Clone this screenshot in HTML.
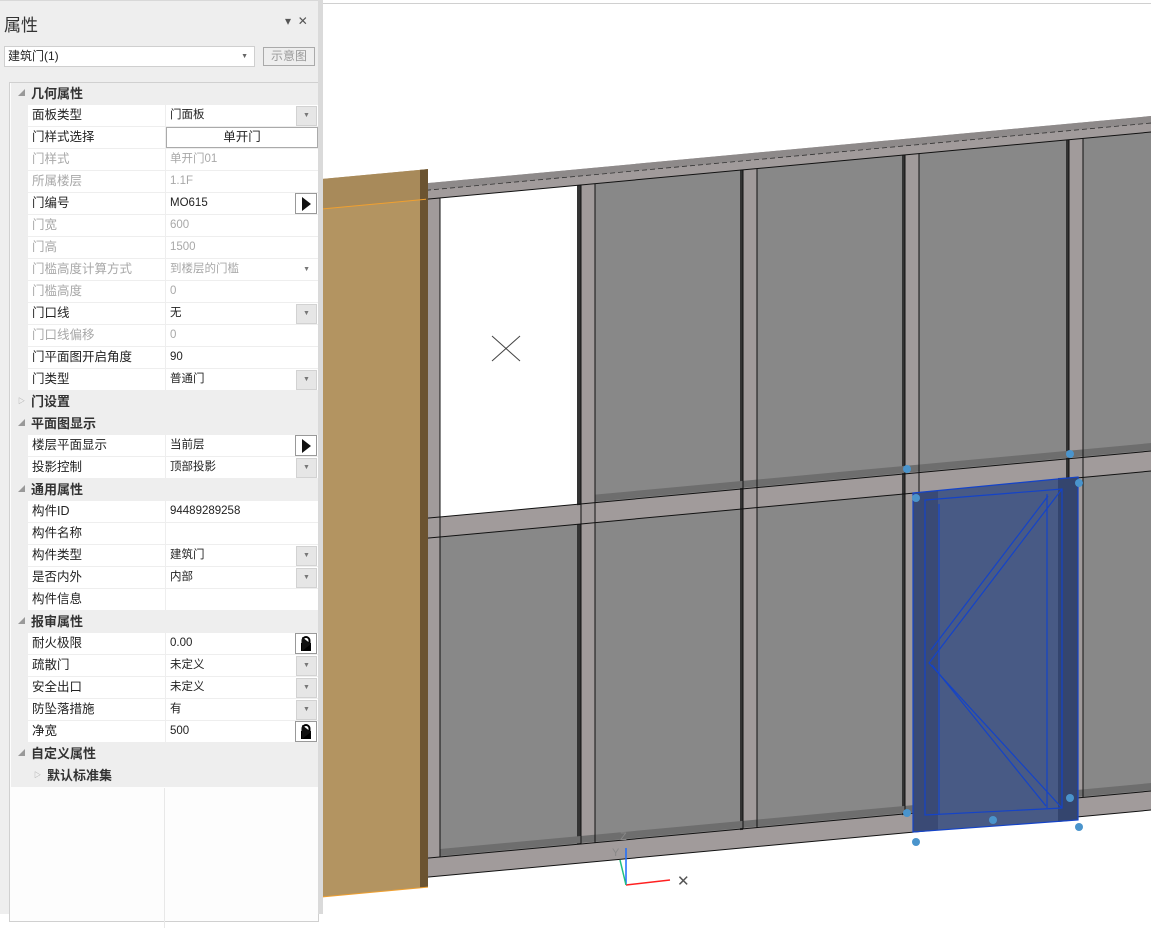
<!DOCTYPE html>
<html><head><meta charset="utf-8"><style>
*{margin:0;padding:0;box-sizing:border-box}
body{width:1151px;height:914px;overflow:hidden;background:#fff;font-family:"Liberation Sans","Noto Sans CJK SC",sans-serif;font-size:12px;color:#222;position:relative}
#panel{position:absolute;left:0;top:0;width:320px;height:914px;background:#eeeeee;border-top:1px solid #d8d8d8}
#title{position:absolute;left:4px;top:10px;font-size:17px;color:#333}
#tbtn{position:absolute;left:285px;top:13px;font-size:12px;color:#555}
#combo{position:absolute;left:4px;top:45px;width:251px;height:21px;background:#fff;border:1px solid #cfcfcf;font-size:12px;line-height:19px;padding-left:3px}
#combo span{position:absolute;right:6px;top:0;font-size:7px;color:#666}
#sbtn{position:absolute;left:263px;top:46px;width:52px;height:19px;border:1px solid #aaa;background:#eee;color:#999;font-size:12px;line-height:17px;text-align:center}
#grid{position:absolute;left:9px;top:81px;width:310px;height:840px;border:1px solid #d0d0d0;background:#fdfdfd}
#colline{position:absolute;left:154px;top:705px;width:1px;height:140px;background:#e8e8e8}
.r{position:absolute;left:1px;width:307px;height:22px}
.h{background:#eeeeee;font-weight:bold;font-size:13px;color:#333;line-height:22px}
.h .t{position:absolute;left:20px}
.h .tri{position:absolute;left:7px;top:0;font-size:7px;color:#999;font-weight:normal}
.p{background:#eee}
.p .n{position:absolute;left:17px;top:0;width:137px;height:21px;background:#fff;line-height:21px;padding-left:4px;font-size:12.5px}
.p .v{position:absolute;left:155px;top:0;width:152px;height:21px;background:#fff;line-height:21px;padding-left:4px;font-size:11.5px}
.g .n,.g .v{color:#a8a8a8}
.dd{position:absolute;right:1px;top:1px;width:21px;height:20px;background:#e6e6e6;border:1px solid #d2d2d2;font-size:7px;color:#777;text-align:center;line-height:18px}
.ar{position:absolute;right:1px;top:0;width:22px;height:21px;background:#fff;border:1px solid #999}
.ar:after{content:"";position:absolute;left:6px;top:3px;border-left:9px solid #111;border-top:7px solid transparent;border-bottom:7px solid transparent}
.btn{position:absolute;left:0;top:0;width:152px;height:21px;border:1px solid #aaa;background:#fff;text-align:center;line-height:19px;font-size:12.5px}
#strip{position:absolute;left:318px;top:0;width:5px;height:914px;background:#dadada}
</style></head><body>
<div id="panel">
<div id="title">属性</div>
<div id="tbtn">▾&nbsp;&nbsp;✕</div>
<div id="combo">建筑门(1)<span>▼</span></div>
<div id="sbtn">示意图</div>
<div id="grid">
<div id="colline"></div>
<div class="r h" style="top:0"><span class="tri">◢</span><span class="t">几何属性</span></div>
<div class="r p" style="top:22px"><div class="n">面板类型</div><div class="v">门面板<div class="dd">▼</div></div></div>
<div class="r p" style="top:44px"><div class="n">门样式选择</div><div class="v"><div class="btn">单开门</div></div></div>
<div class="r p g" style="top:66px"><div class="n">门样式</div><div class="v">单开门01</div></div>
<div class="r p g" style="top:88px"><div class="n">所属楼层</div><div class="v">1.1F</div></div>
<div class="r p" style="top:110px"><div class="n">门编号</div><div class="v">MO615<div class="ar"></div></div></div>
<div class="r p g" style="top:132px"><div class="n">门宽</div><div class="v">600</div></div>
<div class="r p g" style="top:154px"><div class="n">门高</div><div class="v">1500</div></div>
<div class="r p g" style="top:176px"><div class="n">门槛高度计算方式</div><div class="v">到楼层的门槛<span style="position:absolute;right:8px;font-size:7px;color:#777">▼</span></div></div>
<div class="r p g" style="top:198px"><div class="n">门槛高度</div><div class="v">0</div></div>
<div class="r p" style="top:220px"><div class="n">门口线</div><div class="v">无<div class="dd">▼</div></div></div>
<div class="r p g" style="top:242px"><div class="n">门口线偏移</div><div class="v">0</div></div>
<div class="r p" style="top:264px"><div class="n">门平面图开启角度</div><div class="v">90</div></div>
<div class="r p" style="top:286px"><div class="n">门类型</div><div class="v">普通门<div class="dd">▼</div></div></div>
<div class="r h" style="top:308px"><span class="tri">▷</span><span class="t">门设置</span></div>
<div class="r h" style="top:330px"><span class="tri">◢</span><span class="t">平面图显示</span></div>
<div class="r p" style="top:352px"><div class="n">楼层平面显示</div><div class="v">当前层<div class="ar"></div></div></div>
<div class="r p" style="top:374px"><div class="n">投影控制</div><div class="v">顶部投影<div class="dd">▼</div></div></div>
<div class="r h" style="top:396px"><span class="tri">◢</span><span class="t">通用属性</span></div>
<div class="r p" style="top:418px"><div class="n">构件ID</div><div class="v">94489289258</div></div>
<div class="r p" style="top:440px"><div class="n">构件名称</div><div class="v"></div></div>
<div class="r p" style="top:462px"><div class="n">构件类型</div><div class="v">建筑门<div class="dd">▼</div></div></div>
<div class="r p" style="top:484px"><div class="n">是否内外</div><div class="v">内部<div class="dd">▼</div></div></div>
<div class="r p" style="top:506px"><div class="n">构件信息</div><div class="v"></div></div>
<div class="r h" style="top:528px"><span class="tri">◢</span><span class="t">报审属性</span></div>
<div class="r p" style="top:550px"><div class="n">耐火极限</div><div class="v">0.00<div class="ar" style="border-color:#999"><svg width="20" height="19" style="position:absolute;left:0;top:0"><path d="M6.5 9V6.5a3.5 3.5 0 0 1 7 0V9" fill="none" stroke="#000" stroke-width="2"/><rect x="5" y="9" width="10" height="8" fill="#000"/></svg></div></div></div>
<div class="r p" style="top:572px"><div class="n">疏散门</div><div class="v">未定义<div class="dd">▼</div></div></div>
<div class="r p" style="top:594px"><div class="n">安全出口</div><div class="v">未定义<div class="dd">▼</div></div></div>
<div class="r p" style="top:616px"><div class="n">防坠落措施</div><div class="v">有<div class="dd">▼</div></div></div>
<div class="r p" style="top:638px"><div class="n">净宽</div><div class="v">500<div class="ar"><svg width="20" height="19" style="position:absolute;left:0;top:0"><path d="M6.5 9V6.5a3.5 3.5 0 0 1 7 0V9" fill="none" stroke="#000" stroke-width="2"/><rect x="5" y="9" width="10" height="8" fill="#000"/></svg></div></div></div>
<div class="r h" style="top:660px"><span class="tri">◢</span><span class="t">自定义属性</span></div>
<div class="r h" style="top:682px"><span class="tri" style="left:23px">▷</span><span class="t" style="left:36px">默认标准集</span></div>
</div>
</div>
<div id="strip"></div>
<svg style="position:absolute;left:0;top:0" width="1151" height="914">
<line x1="323" y1="3.5" x2="1151" y2="3.5" stroke="#d0d0d0"/>
<g transform="translate(440,0) skewY(-5.3)">
<rect x="-14" y="182" width="730" height="694" fill="#a19b9b"/>
<rect x="-14" y="182" width="730" height="7" fill="#8e8a8a"/>
<line x1="-14" y1="189" x2="716" y2="189" stroke="#333" stroke-dasharray="5 3" stroke-width="0.8"/>
<rect x="0" y="198" width="140" height="319" fill="#fff"/>
<g fill="#888">
<rect x="155" y="198" width="148" height="319"/><rect x="317" y="198" width="148" height="319"/><rect x="479" y="198" width="150" height="319"/><rect x="643" y="198" width="80" height="319"/>
<rect x="0" y="537" width="141" height="320"/><rect x="155" y="537" width="148" height="320"/><rect x="317" y="537" width="148" height="320"/><rect x="479" y="537" width="150" height="320"/><rect x="643" y="537" width="80" height="320"/>
</g>
<g fill="#333">
<rect x="137" y="198" width="4" height="320"/><rect x="300" y="198" width="3" height="660"/><rect x="462" y="198" width="3" height="660"/><rect x="626" y="198" width="3" height="660"/><rect x="137" y="537" width="4" height="320"/>
</g>
<g fill="#6e6e6e"><rect x="155" y="509" width="560" height="7"/><rect x="0" y="849" width="715" height="7"/></g>
<g fill="none" stroke="#111" stroke-width="1">
<line x1="-14" y1="198" x2="716" y2="198"/><line x1="-14" y1="517" x2="716" y2="517"/><line x1="-14" y1="537" x2="716" y2="537"/><line x1="-14" y1="857" x2="716" y2="857"/><line x1="-14" y1="876" x2="716" y2="876"/>
<line x1="0" y1="198" x2="0" y2="857"/><line x1="141" y1="198" x2="141" y2="857"/><line x1="155" y1="198" x2="155" y2="857"/><line x1="303" y1="198" x2="303" y2="857"/><line x1="317" y1="198" x2="317" y2="857"/><line x1="465" y1="198" x2="465" y2="857"/><line x1="479" y1="198" x2="479" y2="857"/><line x1="629" y1="198" x2="629" y2="857"/><line x1="643" y1="198" x2="643" y2="857"/>
</g>
<rect x="-117" y="168" width="105" height="718" fill="#b39461"/>
<rect x="-117" y="168" width="105" height="30" fill="#a88a5a"/>
<rect x="-20" y="168" width="8" height="718" fill="#6b5330"/>
<line x1="-117" y1="198" x2="-14" y2="198" stroke="#f0a030"/>
<line x1="-117" y1="886" x2="-12" y2="886" stroke="#f0a030"/>
</g>
<line x1="492" y1="336" x2="520" y2="361" stroke="#444"/><line x1="520" y1="336" x2="492" y2="361" stroke="#444"/>
<polygon points="913,493 1078,477 1078,820 913,832" fill="#485a85"/>
<polygon points="1058,478 1078,477 1078,820 1058,822" fill="#34456e"/>
<polygon points="913,493 938,491 938,830 913,832" fill="#3a4a75"/>
<g fill="none" stroke="#1443c8" stroke-width="1.2">
<polygon points="913,493 1078,477 1078,820 913,832"/>
<polygon points="925,500 1062,489 1062,808 925,815"/>
<line x1="939" y1="504" x2="939" y2="815"/><line x1="1047" y1="494" x2="1047" y2="808"/>
<polyline points="1062,489 929,663 1062,808"/>
<polyline points="1048,496 931,650"/><polyline points="932,665 1046,806"/>
</g>
<g fill="#4a94cc"><circle cx="907" cy="469" r="4"/><circle cx="1070" cy="454" r="4"/><circle cx="916" cy="498" r="4"/><circle cx="1079" cy="483" r="4"/><circle cx="907" cy="813" r="4"/><circle cx="1070" cy="798" r="4"/><circle cx="993" cy="820" r="4"/><circle cx="916" cy="842" r="4"/><circle cx="1079" cy="827" r="4"/></g>
<line x1="626" y1="848" x2="626" y2="885" stroke="#1a6cff" stroke-width="1.5"/>
<line x1="626" y1="885" x2="670" y2="880" stroke="#ff2020" stroke-width="1.5"/>
<line x1="620" y1="860" x2="626" y2="885" stroke="#20c080" stroke-width="1.5"/>
<text x="620" y="840" font-size="11" fill="#888" font-family="Liberation Sans">Z</text>
<text x="612" y="856" font-size="11" fill="#888" font-family="Liberation Sans">Y</text>
<text x="677" y="886" font-size="15" fill="#555" font-family="Liberation Sans">✕</text>
</svg>
</body></html>
